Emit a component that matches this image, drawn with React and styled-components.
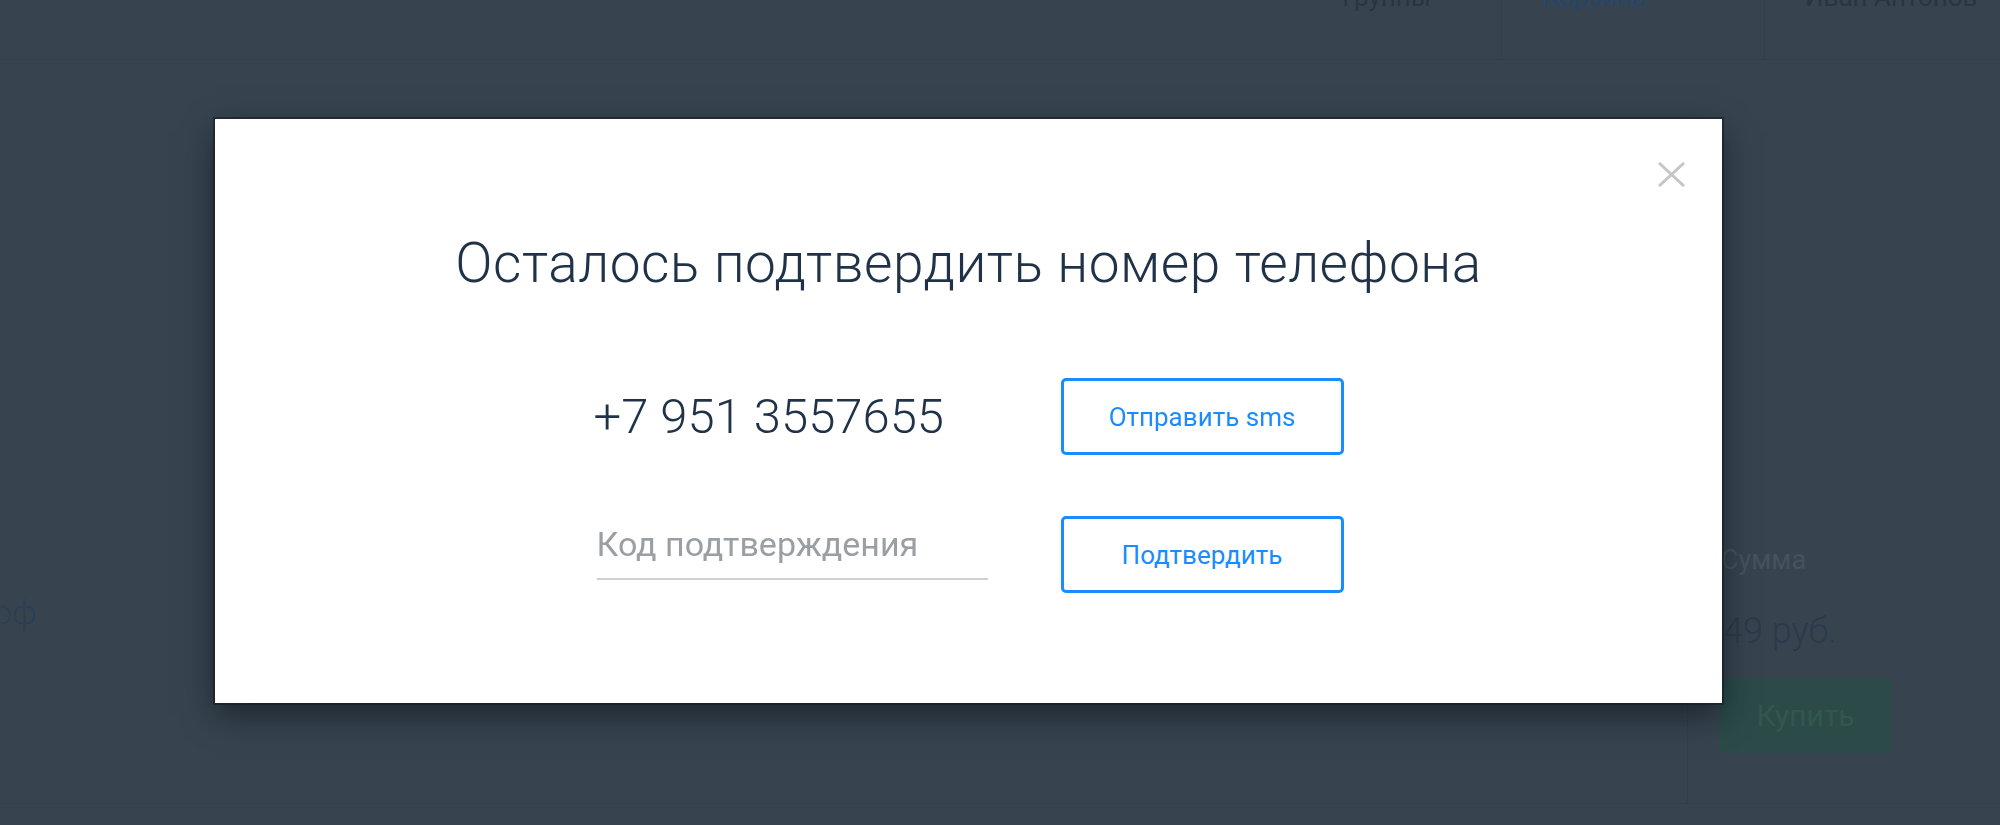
import React from "react";
import styled, { createGlobalStyle } from "styled-components";

const GlobalStyle = createGlobalStyle`
  html, body {
    margin: 0;
    padding: 0;
    background: #37444f;
    font-family: Roboto, "Open Sans", Arial, sans-serif;
    overflow: hidden;
  }
`;

const Page = styled.div`
  width: 2000px;
  height: 825px;
  display: flex;
  flex-direction: column;
  background: #37444f;
  overflow: hidden;
`;

const Header = styled.header`
  height: 59px;
  flex: none;
  display: flex;
  justify-content: flex-end;
  border-bottom: 1px solid #333f49;
  overflow: hidden;
`;

const NavItem = styled.div`
  box-sizing: border-box;
  width: ${(p) => p.$width}px;
  display: flex;
  align-items: flex-start;
  justify-content: ${(p) => (p.$end ? "flex-end" : "flex-start")};
  gap: 14px;
  padding: 0 ${(p) => (p.$end ? "70px" : "0")} 0 ${(p) => (p.$end ? "0" : "40px")};
  margin-top: -17px;
  height: 76px;
  font-size: 26px;
  line-height: 28px;
  white-space: nowrap;
  color: ${(p) => p.$color || "#29353f"};
  border-left: ${(p) => (p.$sep ? "1px solid #33404a" : "none")};
`;

const Dots = styled.span`
  color: #24466d;
  letter-spacing: 6px;
  font-weight: 700;
`;

const Content = styled.main`
  flex: 1;
  display: flex;
  justify-content: space-between;
`;

const Footer = styled.footer`
  height: 21px;
  flex: none;
  border-top: 1px solid #333f49;
`;

const LeftText = styled.div`
  margin-top: 532px;
  margin-left: -50px;
  font-size: 34px;
  font-weight: 300;
  color: #2c3e52;
`;

const SidePanel = styled.aside`
  width: 281px;
  margin-top: 300px;
  border-left: 1px solid #33404a;
  padding: 184px 0 0 31px;
  display: flex;
  flex-direction: column;
  align-items: flex-start;
`;

const SumLabel = styled.div`
  font-size: 27px;
  color: #46525d;
  margin-left: 2px;
`;

const SumValue = styled.div`
  margin-top: 34px;
  font-size: 36px;
  font-weight: 300;
  color: #2b3a4a;
  margin-left: -16px;
`;

const BuyButton = styled.div`
  margin-top: 26px;
  width: 173px;
  height: 75px;
  border-radius: 5px;
  background: #2b4a48;
  color: #33574f;
  font-size: 30px;
  display: flex;
  align-items: center;
  justify-content: center;
`;

const Overlay = styled.div`
  position: fixed;
  inset: 0;
  padding: 119px 0 0 215px;
`;

const Modal = styled.div`
  position: relative;
  width: 1507px;
  height: 584px;
  box-sizing: border-box;
  background: #fff;
  padding-top: 114px;
  box-shadow: 0 0 0 2px rgba(20, 28, 36, 0.55), 0 12px 30px rgba(10, 16, 22, 0.6);
  display: flex;
  flex-direction: column;
  align-items: center;
`;

const CloseButton = styled.button`
  position: absolute;
  top: 43px;
  right: 37px;
  width: 27px;
  height: 25px;
  padding: 0;
  border: none;
  background: none;
  cursor: pointer;
  display: flex;
`;

const Title = styled.h2`
  margin: 0;
  font-size: 55px;
  line-height: 60px;
  letter-spacing: 0.5px;
  font-weight: 300;
  color: #1f3247;
  white-space: nowrap;
`;

const Form = styled.div`
  margin-top: 85px;
  display: grid;
  grid-template-columns: 394px 283px;
  column-gap: 73px;
  row-gap: 61px;
  align-items: center;
`;

const Phone = styled.div`
  font-size: 49px;
  font-weight: 300;
  color: #1f3247;
  white-space: nowrap;
`;

const CodeInput = styled.input`
  box-sizing: border-box;
  width: 391px;
  height: 50px;
  margin-left: 3px;
  padding: 0 0 19px;
  border: none;
  border-bottom: 2px solid #cfd0d1;
  outline: none;
  font-family: inherit;
  font-size: 34px;
  color: #1f3247;
  &::placeholder {
    color: #9a9fa4;
  }
`;

const OutlineButton = styled.button`
  box-sizing: border-box;
  width: 283px;
  height: 77px;
  border: 3px solid #1a8cff;
  border-radius: 5px;
  background: #fff;
  color: #1a8cff;
  font-family: inherit;
  font-size: 26px;
  cursor: pointer;
`;

const App = () => (
  <>
    <GlobalStyle />
    <Page>
      <Header>
        <NavItem $width={200} $end>Группы</NavItem>
        <NavItem $width={263} $sep $color="#24466d">
          Корзина <Dots>•••</Dots>
        </NavItem>
        <NavItem $width={236} $sep>Иван Антонов</NavItem>
      </Header>
      <Content>
        <LeftText>Проф</LeftText>
        <SidePanel>
          <SumLabel>Сумма</SumLabel>
          <SumValue>149 руб.</SumValue>
          <BuyButton>Купить</BuyButton>
        </SidePanel>
      </Content>
      <Footer />
    </Page>
    <Overlay>
      <Modal>
        <CloseButton aria-label="Закрыть">
          <svg width="27" height="25" viewBox="0 0 27 25">
            <path d="M1 1 L26 24 M26 1 L1 24" stroke="#c6c6c6" strokeWidth="3" fill="none" />
          </svg>
        </CloseButton>
        <Title>Осталось подтвердить номер телефона</Title>
        <Form>
          <Phone>+7 951 3557655</Phone>
          <OutlineButton>Отправить sms</OutlineButton>
          <CodeInput placeholder="Код подтверждения" />
          <OutlineButton>Подтвердить</OutlineButton>
        </Form>
      </Modal>
    </Overlay>
  </>
);

export default App;
